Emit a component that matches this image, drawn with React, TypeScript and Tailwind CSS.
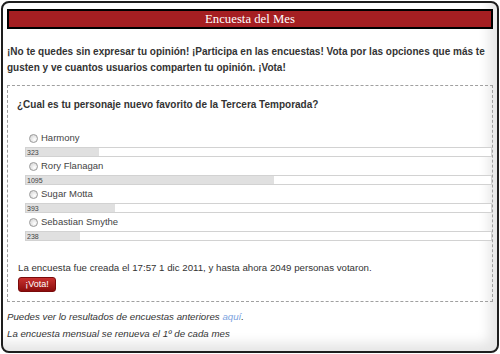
const options = [
  { name: 'Harmony', votes: 323 },
  { name: 'Rory Flanagan', votes: 1095 },
  { name: 'Sugar Motta', votes: 393 },
  { name: 'Sebastian Smythe', votes: 238 },
];

const total = options.reduce((sum, o) => sum + o.votes, 0);

function Radio() {
  return (
    <span className="block h-[9px] w-[9px] rounded-full border border-[#9a9a9a] bg-[radial-gradient(circle_at_65%_65%,#ffffff,#cfcfcf)]" />
  );
}

export default function App() {
  return (
    <div className="h-[354px] w-[500px] bg-white p-px font-['Liberation_Sans',Arial,sans-serif] text-[#333]">
      <div className="h-full rounded-[8px] border-2 border-[#1e1e1e] bg-white px-[4px] pt-[6px] shadow-[inset_-8px_-8px_12px_rgba(0,0,0,0.1)]">
        {/* cabecera */}
        <div className="h-[20px] border-2 border-black bg-[#a51f22] text-center font-['Liberation_Serif','Times_New_Roman',serif] text-[12.75px] leading-[16px] text-white">
          Encuesta del Mes
        </div>

        <p className="mt-[15px] text-[10px] font-bold leading-[16px]">
          ¡No te quedes sin expresar tu opinión! ¡Participa en las encuestas! Vota por las opciones que más te gusten y ve
          cuantos usuarios comparten tu opinión. ¡Vota!
        </p>

        {/* encuesta */}
        <div className="mt-[9px] border border-dashed border-[#a0a0a0] pb-[9px] pt-[12px]">
          <div className="pl-[9px] text-[10px] font-bold leading-[14px]">
            ¿Cual es tu personaje nuevo favorito de la Tercera Temporada?
          </div>

          <div className="ml-[17px] mt-[17px]">
            {options.map(opt => (
              <div key={opt.name}>
                <div className="flex h-[18px] items-center gap-[3px] pl-[4px] text-[9.5px] text-[#444]">
                  <Radio />
                  <span>{opt.name}</span>
                </div>
                <div className="h-[10px] border border-[#d2d2d2] bg-white">
                  <div
                    className="flex h-full items-end whitespace-nowrap bg-[#e0e0e0] pl-px text-[7px] leading-[7px] text-[#444]"
                    style={{ width: `${(opt.votes / total) * 100}%` }}
                  >
                    {opt.votes}
                  </div>
                </div>
              </div>
            ))}
          </div>

          <div className="mt-[20px] pl-[10px] text-[9.7px] leading-[14px]">
            La encuesta fue creada el 17:57 1 dic 2011, y hasta ahora {total} personas votaron.
          </div>
          <div className="flex pl-[10px] pt-[2px]">
            <button className="h-[15px] w-[38px] rounded-[3px] border border-[#7a0a0a] bg-gradient-to-b from-[#c8302e] to-[#8c0c0c] text-[9px] leading-[13px] text-white">
              ¡Vota!
            </button>
          </div>
        </div>

        <div className="mt-[6px] text-[9.7px] italic leading-[17px]">
          <p>
            Puedes ver lo resultados de encuestas anteriores <span className="text-[#7aa2e0]">aquí</span>.
          </p>
          <p>La encuesta mensual se renueva el 1º de cada mes</p>
        </div>
      </div>
    </div>
  );
}
